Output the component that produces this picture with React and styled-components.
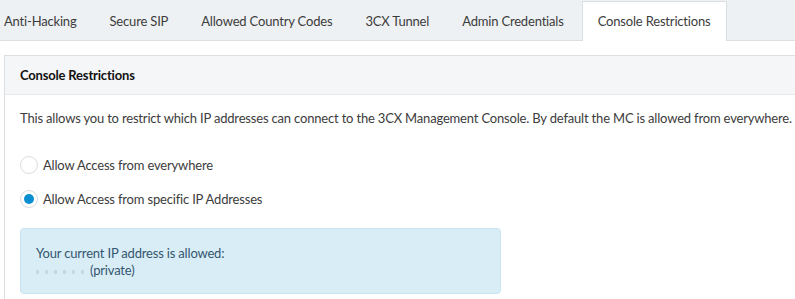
import React from "react";
import styled, { createGlobalStyle } from "styled-components";

const Global = createGlobalStyle`
  html, body { margin: 0; padding: 0; background: #fff; }
  body {
    font-family: Lato, "Noto Sans", sans-serif;
    font-size: 13px;
    letter-spacing: -0.18px;
    color: #3c3c3c;
    overflow: hidden;
  }
  * { box-sizing: border-box; }
`;

const Page = styled.div`
  width: 795px;
  height: 299px;
  overflow: hidden;
`;

const TabBar = styled.div`
  display: flex;
  align-items: flex-end;
  height: 41px;
  background: #eef1f3;
  border-bottom: 1px solid #dcdfe2;
  padding-left: 4px;
`;

const Tab = styled.div`
  height: ${(p) => (p.$active ? "40px" : "38px")};
  display: flex;
  align-items: center;
  padding: 0 ${(p) => (p.$active ? "15px" : "16.5px")} ${(p) => (p.$active ? "1px" : "0")};
  padding-left: ${(p) => (p.$first ? "0" : undefined)};
  margin-left: ${(p) => (p.$active ? "1.5px" : "0")};
  background: ${(p) => (p.$active ? "#fff" : "transparent")};
  border: ${(p) => (p.$active ? "1px solid #dcdfe2" : "none")};
  border-bottom: none;
  margin-bottom: ${(p) => (p.$active ? "-1px" : "0")};
  white-space: nowrap;
`;

const Content = styled.div`
  padding: 14px 0 0 4px;
`;

const Panel = styled.div`
  border: 1px solid #dcdfe2;
  border-right: none;
  height: 300px;
`;

const PanelHeader = styled.div`
  height: 39px;
  background: #f5f6f7;
  border-bottom: 1px solid #e6e8ea;
  display: flex;
  align-items: center;
  padding-left: 15px;
  font-weight: 700;
  color: #111;
`;

const PanelBody = styled.div`
  padding: 14px 0 0 15px;
`;

const Description = styled.p`
  margin: 0 0 29px;
  white-space: nowrap;
  line-height: 18px;
`;

const RadioRow = styled.label`
  display: flex;
  align-items: center;
  gap: 5px;
  height: 18px;
  margin-bottom: 16px;
`;

const RadioCircle = styled.span`
  width: 18px;
  height: 18px;
  border-radius: 50%;
  border: 1px solid #dadcde;
  background: #fff;
  display: flex;
  align-items: center;
  justify-content: center;
  &::after {
    content: "";
    width: 10px;
    height: 10px;
    border-radius: 50%;
    background: ${(p) => (p.$checked ? "#0a8fd0" : "transparent")};
  }
`;

const InfoBox = styled.div`
  margin-top: 20px;
  width: 481px;
  height: 66px;
  background: #d9edf7;
  border: 1px solid #c9e4f0;
  border-radius: 4px;
  padding: 16px 0 0 15px;
  color: #34566e;
  line-height: 17px;
`;

const Masked = styled.span`
  display: inline-block;
  width: 51px;
  height: 4px;
  margin-right: 3px;
  vertical-align: middle;
  background: repeating-linear-gradient(90deg, #c4d9e5 0 3px, transparent 3px 9px);
`;

const tabs = [
  "Anti-Hacking",
  "Secure SIP",
  "Allowed Country Codes",
  "3CX Tunnel",
  "Admin Credentials",
  "Console Restrictions",
];

export default function App() {
  return (
    <Page>
      <Global />
      <TabBar>
        {tabs.map((t, i) => (
          <Tab key={t} $first={i === 0} $active={i === tabs.length - 1}>
            {t}
          </Tab>
        ))}
      </TabBar>
      <Content>
        <Panel>
          <PanelHeader>Console Restrictions</PanelHeader>
          <PanelBody>
            <Description>
              This allows you to restrict which IP addresses can connect to the 3CX Management Console. By default the MC is allowed from everywhere.
            </Description>
            <RadioRow>
              <RadioCircle />
              Allow Access from everywhere
            </RadioRow>
            <RadioRow>
              <RadioCircle $checked />
              Allow Access from specific IP Addresses
            </RadioRow>
            <InfoBox>
              Your current IP address is allowed:
              <br />
              <Masked />(private)
            </InfoBox>
          </PanelBody>
        </Panel>
      </Content>
    </Page>
  );
}
